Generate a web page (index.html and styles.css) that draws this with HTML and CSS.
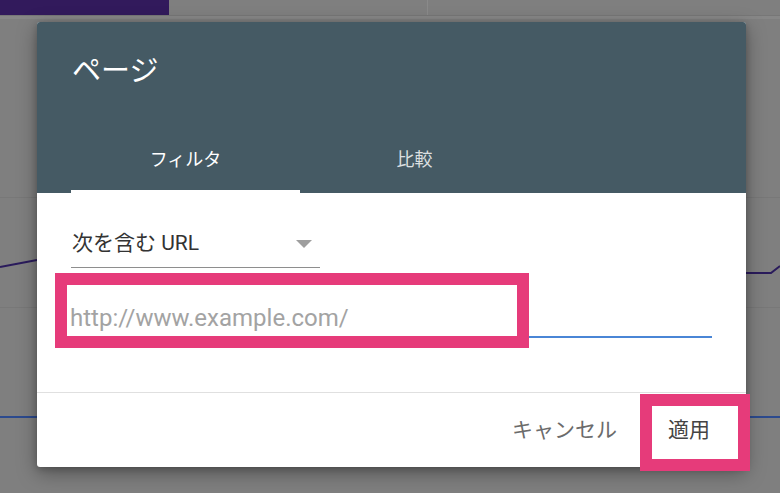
FILE: index.html
```html
<!DOCTYPE html>
<html lang="ja">
<head>
<meta charset="utf-8">
<title>ページ</title>
<link rel="stylesheet" href="styles.css">
</head>
<body>
<svg class="backdrop" width="780" height="493" viewBox="0 0 780 493" aria-hidden="true">
  <rect x="0" y="0" width="780" height="493" fill="#7f7f7f"/>
  <rect x="0" y="0" width="169" height="15" fill="#321a5c"/>
  <rect x="0" y="15" width="780" height="1" fill="#777"/>
  <rect x="0" y="16" width="780" height="3" fill="#878787"/>
  <rect x="427" y="0" width="1" height="15" fill="#8a8a8a"/>
  <rect x="0" y="197" width="780" height="1" fill="#787878"/>
  <rect x="0" y="307" width="780" height="1" fill="#787878"/>
  <polyline points="0,267 37,260" fill="none" stroke="#2a1b5c" stroke-width="2"/>
  <polyline points="746,273 771,273 780,266" fill="none" stroke="#2a1b5c" stroke-width="2"/>
  <line x1="0" y1="417" x2="780" y2="417" stroke="#2c4a8e" stroke-width="2"/>
</svg>

<div class="dialog">
  <header class="dialog-head">
    <h1 class="title">ページ</h1>
    <nav class="tabs">
      <div class="tab active">フィルタ</div>
      <div class="tab">比較</div>
    </nav>
  </header>
  <section class="dialog-body">
    <div class="select">
      <span class="select-label">次を含む URL</span>
      <span class="select-arrow"></span>
    </div>
    <div class="field">
      <span class="placeholder">http://www.example.com/</span>
    </div>
  </section>
  <footer class="dialog-foot">
    <button class="btn cancel">キャンセル</button>
    <button class="btn apply">適用</button>
  </footer>
  <div class="mark mark-input"></div>
  <div class="mark mark-apply"></div>
</div>
</body>
</html>
```
FILE: styles.css
```css
html, body {
  margin: 0;
  padding: 0;
}
body {
  width: 780px;
  height: 493px;
  overflow: hidden;
  background: #7f7f7f;
  font-family: Roboto, "Noto Sans CJK JP", sans-serif;
  position: relative;
  padding: 22px 0 0 37px;
  box-sizing: border-box;
}
.backdrop {
  position: absolute;
  left: 0;
  top: 0;
  display: block;
}
.dialog {
  position: relative;
  width: 709px;
  height: 445px;
  background: #fff;
  border-radius: 3px;
  box-shadow: 0 6px 20px rgba(0, 0, 0, 0.35), 0 2px 6px rgba(0, 0, 0, 0.2);
  display: flex;
  flex-direction: column;
}
.dialog-head {
  background: #455a64;
  height: 171px;
  flex: none;
  border-radius: 3px 3px 0 0;
  display: flex;
  flex-direction: column;
}
.title {
  margin: 0;
  height: 114px;
  box-sizing: border-box;
  padding: 29px 0 0 35px;
  font-size: 29px;
  line-height: 40px;
  font-weight: 400;
  color: #fff;
}
.tabs {
  display: flex;
  padding-left: 34px;
}
.tab {
  width: 229px;
  height: 57px;
  box-sizing: border-box;
  padding-top: 10px;
  text-align: center;
  font-size: 18px;
  line-height: 28px;
  color: rgba(255, 255, 255, 0.82);
  border-bottom: 3px solid transparent;
}
.tab.active {
  color: #fff;
  border-bottom-color: #fff;
}
.dialog-body {
  height: 200px;
  flex: none;
  box-sizing: border-box;
  border-bottom: 1px solid #e0e0e0;
  padding: 30px 34px 0 34px;
  display: flex;
  flex-direction: column;
}
.select {
  width: 249px;
  height: 45px;
  flex: none;
  box-sizing: border-box;
  border-bottom: 1px solid #8e8e8e;
  display: flex;
  align-items: center;
  justify-content: space-between;
  padding: 0 8px 4px 1px;
}
.select-label {
  font-size: 21px;
  line-height: 40px;
  color: #333;
}
.select-arrow {
  width: 0;
  height: 0;
  border-left: 8px solid transparent;
  border-right: 8px solid transparent;
  border-top: 8px solid #9e9e9e;
  margin-top: 2px;
}
.field {
  margin-top: 33px;
  width: 641px;
  height: 37px;
  flex: none;
  box-sizing: border-box;
  border-bottom: 2px solid #4a86d6;
  display: flex;
  align-items: flex-start;
}
.placeholder {
  font-size: 24px;
  line-height: 34px;
  color: #a3a3a3;
  margin-left: -1px;
}
.dialog-foot {
  flex: 1;
  display: flex;
  justify-content: flex-end;
  align-items: center;
  padding: 0 20px 0 0;
  gap: 19px;
}
.btn {
  border: 0;
  background: transparent;
  font-family: inherit;
  font-size: 21px;
  line-height: 36px;
  padding: 0 16px;
  margin: 0;
}
.btn.cancel {
  color: #6b6b6b;
}
.btn.apply {
  color: #444;
}
.mark {
  position: absolute;
  border: 12px solid #e63b7a;
  box-sizing: border-box;
}
.mark-input {
  left: 18px;
  top: 251px;
  width: 474px;
  height: 75px;
}
.mark-apply {
  left: 603px;
  top: 372px;
  width: 110px;
  height: 77px;
}
```
